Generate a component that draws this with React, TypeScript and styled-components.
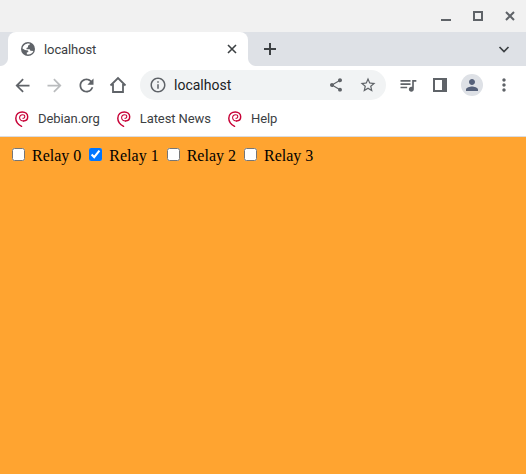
import React from "react";
import styled, { createGlobalStyle } from "styled-components";
import {
  MdArrowBack,
  MdArrowForward,
  MdInfoOutline,
  MdMoreVert,
  MdPerson,
  MdQueueMusic,
  MdRefresh,
  MdShare,
  MdStarBorder,
} from "react-icons/md";

const GlobalStyle = createGlobalStyle`
  body { margin: 0; overflow: hidden; }
`;

const Window = styled.div`
  display: flex;
  flex-direction: column;
  width: 526px;
  height: 474px;
  font-family: Roboto, "Liberation Sans", sans-serif;
  background: #fff;
  svg { display: block; flex: none; }
`;

const TitleBar = styled.header`
  display: flex;
  justify-content: flex-end;
  align-items: center;
  gap: 22px;
  height: 32px;
  padding-right: 11px;
  box-sizing: border-box;
  background: #f1f1f1;
`;

const TabStrip = styled.div`
  display: flex;
  align-items: center;
  height: 34px;
  padding: 0 14px 0 8px;
  background: #dee1e6;
`;

const Tab = styled.div`
  position: relative;
  display: flex;
  align-items: center;
  width: 240px;
  height: 34px;
  padding: 0 11px 0 13px;
  box-sizing: border-box;
  border-radius: 8px 8px 0 0;
  background: #fff;
  &::before,
  &::after {
    content: "";
    position: absolute;
    bottom: 0;
    width: 8px;
    height: 8px;
  }
  &::before {
    left: -8px;
    background: radial-gradient(circle at 0 0, transparent 7.5px, #fff 8.5px);
  }
  &::after {
    right: -8px;
    background: radial-gradient(circle at 100% 0, transparent 7.5px, #fff 8.5px);
  }
`;

const TabTitle = styled.span`
  flex: 1;
  margin-left: 9px;
  padding-top: 1px;
  font-size: 13px;
  line-height: 16px;
  letter-spacing: -0.1px;
  color: #3c4043;
`;

const NewTab = styled.div`
  flex: 1;
  padding-left: 16px;
`;

const Toolbar = styled.nav`
  display: flex;
  align-items: center;
  height: 38px;
  padding: 0 0 0 12px;
  color: #5f6368;
`;

const NavButtons = styled.div`
  display: flex;
  flex: none;
  gap: 12px;
  width: 128px;
`;

const NavIcon = styled.span<{ $disabled?: boolean }>`
  display: flex;
  align-items: center;
  justify-content: center;
  width: 20px;
  height: 20px;
  color: ${(p) => (p.$disabled ? "#babcbe" : "#5f6368")};
`;

const AddressBar = styled.div`
  display: flex;
  align-items: center;
  width: 246px;
  height: 30px;
  flex: none;
  padding: 0 9px;
  box-sizing: border-box;
  border-radius: 15px;
  background: #f1f3f4;
`;

const Url = styled.span`
  flex: 1;
  margin-left: 7px;
  font-size: 14px;
  line-height: 18px;
  color: #202124;
`;

const AddressActions = styled.div`
  display: flex;
  align-items: center;
  gap: 15px;
`;

const ToolbarActions = styled.div`
  display: flex;
  flex: none;
  align-items: center;
  margin-left: 12px;
`;

const PanelSlot = styled.span`
  margin: 0 14px 0 15px;
`;

const Avatar = styled.span`
  display: flex;
  align-items: center;
  justify-content: center;
  width: 22px;
  height: 22px;
  margin-right: 11px;
  border-radius: 50%;
  background: #dee1e6;
  color: #56617a;
`;

const Bookmarks = styled.div`
  display: flex;
  gap: 16px;
  height: 32px;
  padding: 0 14px;
  border-bottom: 1px solid #dadce0;
`;

const Bookmark = styled.span`
  display: flex;
  align-items: center;
  gap: 8px;
  height: 29px;
  font-size: 13px;
  letter-spacing: -0.08px;
  color: #3c4043;
`;

const Page = styled.main`
  flex: 1;
  padding: 8px;
  background: #ffa430;
  color: #000;
  font: 16px "Liberation Serif", "Times New Roman", serif;
`;

const GlobeIcon = () => (
  <svg width="14" height="14" viewBox="0 0 14 14">
    <circle cx="7" cy="7" r="7" fill="#5f6368" />
    <path d="M8.600 1.600v1.300L7 3.600v1.600l-1.500.9v1.100h3.200l.7 1.500 3 .2C11.600 11 9.700 12.500 7 12.500l-1.200-.2v-1.700l1.600-.6-.4-1.400-3 -.6L1.500 6.400C2 3.600 4.500 1.200 8.600 1.600z" fill="#fff" />
  </svg>
);

const DebianIcon = () => (
  <svg width="16" height="16" viewBox="0 0 16 16" fill="none" stroke="#c70036" strokeLinecap="round">
    <path d="M7.600 15.300C4 13.500 1.800 10.600 1.800 7.200 1.800 3.300 4.800.9 8.300.9c3.200 0 5.400 2.200 5.400 4.900 0 2.500-1.800 4.200-4.200 4.200" strokeWidth="1.450" />
    <path d="M9.500 10C7.200 10 5.600 8.700 5.600 6.700c0-1.700 1.300-3 3-3 1.400 0 2.200.8 2.200 1.900 0 1-.8 1.700-1.900 1.600" strokeWidth="1.050" />
  </svg>
);

const CrossIcon = ({ size, stroke, color }: { size: number; stroke: number; color: string }) => (
  <svg width={size} height={size} viewBox={`0 0 ${size} ${size}`}>
    <path
      d={`M1 1 ${size - 1} ${size - 1}M${size - 1} 1 1 ${size - 1}`}
      stroke={color}
      strokeWidth={stroke}
    />
  </svg>
);

const MinimizeIcon = () => (
  <svg width="10" height="10"><path d="M0 9h10" stroke="#5f6368" strokeWidth="2" /></svg>
);

const MaximizeIcon = () => (
  <svg width="10" height="10"><path d="M1 1h8v8H1z" stroke="#5f6368" strokeWidth="2" fill="none" /></svg>
);

const PlusIcon = () => (
  <svg width="12" height="12"><path d="M0 6h12M6 0v12" stroke="#3c4043" strokeWidth="2" /></svg>
);

const ChevronIcon = () => (
  <svg width="16" height="16"><path d="m3.500 6 4.500 4.500L12.500 6" stroke="#3c4043" strokeWidth="1.700" fill="none" /></svg>
);

const HomeIcon = () => (
  <svg width="20" height="20">
    <path d="M2.500 10.500 10 3l7.500 7.500M5 9v8h10V9" stroke="currentColor" strokeWidth="1.800" fill="none" />
  </svg>
);

const SidePanelIcon = () => (
  <svg width="14" height="14">
    <path d="M0 0h14v14H0zM2 2v10h7V2z" fill="currentColor" fillRule="evenodd" />
  </svg>
);

const bookmarks = ["Debian.org", "Latest News", "Help"];
const relays = [false, true, false, false];

export default function App() {
  return (
    <Window>
      <GlobalStyle />
      <TitleBar>
        <MinimizeIcon />
        <MaximizeIcon />
        <CrossIcon size={10} stroke={2} color="#5f6368" />
      </TitleBar>
      <TabStrip>
        <Tab>
          <GlobeIcon />
          <TabTitle>localhost</TabTitle>
          <CrossIcon size={10} stroke={1.6} color="#3c4043" />
        </Tab>
        <NewTab><PlusIcon /></NewTab>
        <ChevronIcon />
      </TabStrip>
      <Toolbar>
        <NavButtons>
          <NavIcon><MdArrowBack size={21} /></NavIcon>
          <NavIcon $disabled><MdArrowForward size={21} /></NavIcon>
          <NavIcon><MdRefresh size={21} /></NavIcon>
          <NavIcon><HomeIcon /></NavIcon>
        </NavButtons>
        <AddressBar>
          <MdInfoOutline size={18} />
          <Url>localhost</Url>
          <AddressActions>
            <MdShare size={16} />
            <MdStarBorder size={18} />
          </AddressActions>
        </AddressBar>
        <ToolbarActions>
          <MdQueueMusic size={20} />
          <PanelSlot><SidePanelIcon /></PanelSlot>
          <Avatar><MdPerson size={18} /></Avatar>
          <MdMoreVert size={20} />
        </ToolbarActions>
      </Toolbar>
      <Bookmarks>
        {bookmarks.map((name) => (
          <Bookmark key={name}>
            <DebianIcon />
            {name}
          </Bookmark>
        ))}
      </Bookmarks>
      <Page>
        {relays.map((on, i) => (
          <React.Fragment key={i}>
            <input type="checkbox" id={`relay${i}`} defaultChecked={on} />{" "}
            <label htmlFor={`relay${i}`}>Relay {i}</label>{" "}
          </React.Fragment>
        ))}
      </Page>
    </Window>
  );
}
